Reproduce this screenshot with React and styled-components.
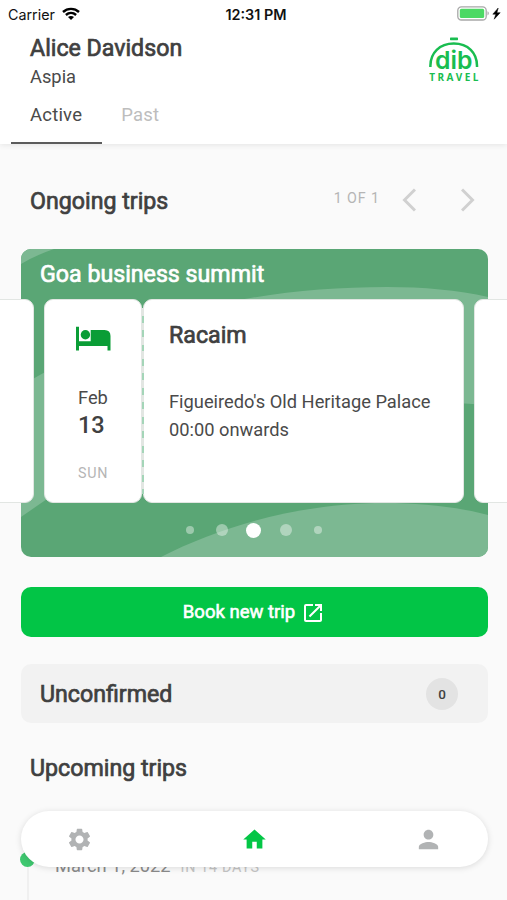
import React from 'react'
import styled, { createGlobalStyle } from 'styled-components'
import { MdHome, MdOpenInNew, MdPerson, MdSettings } from 'react-icons/md'

const GlobalStyle = createGlobalStyle`
	* {
		box-sizing: border-box;
	}
	body {
		margin: 0;
		background: #fafafa;
		font-family: Roboto, sans-serif;
		color: #404040;
	}
`

const Screen = styled.div`
	position: relative;
	display: flex;
	flex-direction: column;
	width: 507px;
	height: 900px;
	overflow: hidden;
	background: #fafafa;

	> * {
		flex: none;
	}
`
const Text = styled.div`
	font-size: ${props => props.$size || 18.3}px;
	line-height: ${props => props.$line || 28}px;
	font-weight: ${props => props.$weight || 400};
	letter-spacing: ${props => props.$spacing || 0}px;
	color: ${props => props.$color || '#4a4a4a'};
	white-space: nowrap;
`
const Title = styled.div`
	font-size: 23.2px;
	line-height: 30px;
	color: ${props => props.$color || '#404040'};
	-webkit-text-stroke: 0.7px ${props => props.$color || '#404040'};
	white-space: nowrap;
`

const Header = styled.header`
	height: 144px;
	background: #fff;
	box-shadow: 0 1px 6px rgba(0, 0, 0, 0.09);
`
const StatusBar = styled.div`
	display: grid;
	grid-template-columns: 1fr auto 1fr;
	align-items: center;
	height: 28px;
	padding: 0 5px 0 8px;
	font-family: Inter, sans-serif;
	font-size: 14.3px;
	color: #111;
`
const Carrier = styled.div`
	display: flex;
	align-items: center;
	gap: 7px;
`
const Clock = styled.div`
	font-weight: 600;
	font-size: 14.4px;
	margin-right: -2px;
`
const Power = styled.div`
	display: flex;
	justify-content: flex-end;
	margin-top: -1px;
`
const Profile = styled.div`
	display: flex;
	justify-content: space-between;
	height: 61px;
	padding: 5px 28px 0 30px;
`
const LogoSvg = styled.svg`
	margin-top: 4px;
`
const Tabs = styled.div`
	display: flex;
	height: 55px;
	padding-left: 11px;
`
const Tab = styled.div`
	padding: 12px 20px 0 19px;
	height: 55px;
	font-size: 18.5px;
	line-height: 28px;
	color: ${props => (props.$active ? '#4a4a4a' : '#bdbdbd')};
	border-bottom: 2px solid ${props => (props.$active ? '#5c5c5c' : 'transparent')};
	letter-spacing: 0.2px;
`

const SectionHead = styled.div`
	display: flex;
	align-items: center;
	justify-content: space-between;
	height: 105px;
	padding: 8px 32px 0 30px;
`
const Pager = styled.div`
	display: flex;
	align-items: center;
	margin-top: -1px;
`
const PageCount = styled(Text)`
	margin-top: -4px;
`
const Chevron = styled.svg`
	margin-left: ${props => props.$gap}px;
`

const TripCard = styled.section`
	position: relative;
	height: 307.5px;
	margin: 0 19.5px 0 20.5px;
	border-radius: 10px;
	background: #5aa675;
`
const Waves = styled.svg`
	position: absolute;
	inset: 0;
	border-radius: 10px;
`
const TripTitle = styled.div`
	position: relative;
	height: 50px;
	padding: 10px 19.5px 0;
`
const Slides = styled.div`
	position: relative;
	display: flex;
	height: 204px;
	margin: 0 -19.5px 0 -20.5px;
	overflow: hidden;
`
const Sheet = styled.div`
	flex: none;
	width: ${props => props.$width}px;
	margin-left: ${props => props.$gap || 0}px;
	padding: ${props => props.$pad || 0};
	background: #fff;
	border: 1px solid #e2e6e3;
	border-radius: ${props => props.$radius || '9px'};
`
const DateSheet = styled(Sheet)`
	display: flex;
	flex-direction: column;
`
const StayDate = styled.div`
	padding: 34px 0 0 2px;
`
const WeekDay = styled(Text)`
	margin-top: 20px;
`
const Details = styled.div`
	margin-top: 38px;
`
const Perforation = styled.div`
	flex: none;
	align-self: center;
	width: 2px;
	height: 186px;
	margin: 0 -0.5px;
	z-index: 1;
	background: repeating-linear-gradient(#e2e6e2 0 7.5px, #a4d5b8 7.5px 14.5px);
`
const Dots = styled.div`
	position: relative;
	display: flex;
	align-items: center;
	justify-content: center;
	height: 54px;
`
const DotSlot = styled.div`
	display: flex;
	justify-content: center;
	width: 31.8px;
`
const Dot = styled.div`
	width: ${props => props.$size}px;
	height: ${props => props.$size}px;
	border-radius: 50%;
	background: ${props => (props.$on ? '#fff' : 'rgba(255, 255, 255, 0.4)')};
`

const BookButton = styled.button`
	display: flex;
	align-items: center;
	justify-content: center;
	gap: 6px;
	height: 50.5px;
	margin: 30px 19.5px 0 20.5px;
	padding: 0;
	border: 0;
	border-radius: 10px;
	background: #02c546;
	color: #fff;
	font-family: inherit;
	font-size: 18.5px;
	-webkit-text-stroke: 0.6px #fff;

	svg {
		-webkit-text-stroke: 0;
		margin-top: 2px;
	}
`
const Unconfirmed = styled.div`
	display: flex;
	align-items: center;
	justify-content: space-between;
	height: 59px;
	margin: 27px 19.5px 0 20.5px;
	padding: 0 29.5px 0 19.5px;
	border-radius: 10px;
	background: #f2f2f2;
`
const Badge = styled.div`
	width: 32px;
	height: 32px;
	border-radius: 50%;
	background: #e3e3e3;
	font-size: 13.5px;
	font-weight: 500;
	line-height: 32px;
	text-align: center;
`
const Upcoming = styled.div`
	padding: 30px 30px 0;
`
const Timeline = styled.div`
	display: flex;
	height: 60px;
	margin-top: 69px;
	padding-left: 20px;
`
const Rail = styled.div`
	display: flex;
	flex-direction: column;
	align-items: center;
	width: 15px;

	&::before {
		content: '';
		width: 15px;
		height: 15px;
		border-radius: 50%;
		background: #3fc870;
	}
	&::after {
		content: '';
		width: 2px;
		flex: 1;
		background: #f0f0f0;
	}
`
const TripDate = styled.div`
	display: flex;
	align-items: baseline;
	gap: 10px;
	padding-left: 20px;
`

const TabBar = styled.nav`
	position: absolute;
	left: 20.5px;
	right: 19.5px;
	top: 811px;
	display: grid;
	grid-template-columns: 1fr 1fr 1fr;
	align-items: center;
	height: 56px;
	padding: 0 44.5px 0 45px;
	border-radius: 28px;
	background: #fff;
	box-shadow: 0 1px 6px rgba(0, 0, 0, 0.13);
`
const NavItem = styled.div`
	display: flex;
	justify-content: ${props => props.$align || 'center'};
	color: ${props => (props.$active ? '#04c646' : '#b1b3b4')};
`

const Wifi = () => (
	<svg width="18" height="14" viewBox="0 0 18 14" fill="none" stroke="#000" strokeWidth="2.4">
		<path d="M1 5C5.500 0.800 12.500 0.800 17 5" />
		<path d="M3.900 8C6.900 5.300 11.100 5.300 14.100 8" />
		<path d="M9 13L6 10C7.700 8.500 10.300 8.500 12 10Z" fill="#000" stroke="none" />
	</svg>
)

const Battery = () => (
	<svg width="45" height="16" viewBox="0 0 45 16">
		<rect x="0.800" y="0.800" width="28.400" height="13.200" rx="3.600" fill="#fff" stroke="#a8a8a8" strokeWidth="1.300" />
		<rect x="2.800" y="2.800" width="24.400" height="9.200" rx="1.600" fill="#4cd964" />
		<path d="M30.500 5.300C32.300 6 32.300 8.800 30.500 9.500Z" fill="#a8a8a8" />
		<path d="M41.200 2L35.800 8.200H38.800L37.200 13.200L43.200 6.700H39.900Z" fill="#000" stroke="#000" strokeWidth="0.500" />
	</svg>
)

const Logo = () => (
	<LogoSvg width="50" height="46" viewBox="0 0 50 46">
		<rect x="21" y="0.600" width="8" height="2.600" rx="0.600" fill="#19bd50" />
		<path d="M1.400 30C0.900 15.500 11 6.600 24.800 6.600S48.500 15.500 48 30" fill="none" stroke="#19bd50" strokeWidth="2.500" />
		<text x="6" y="32.300" textLength="37.500" fontFamily="Inter, sans-serif" fontSize="24.800" fontWeight="600" fill="#19bd50">dib</text>
		<text x="0.300" y="43.700" textLength="49" fontFamily="Open Sans, sans-serif" fontSize="10" fontWeight="700" fill="#19bd50">TRAVEL</text>
	</LogoSvg>
)

const Bed = () => (
	<svg width="35" height="25" viewBox="0 0 35 25" fill="#0a9d36">
		<path d="M0 0.700H3V15.300H14.700V4H28.500Q34.500 4 34.500 10V24.500H31.500V20H3V24.500H0Z" />
		<circle cx="9.400" cy="8.800" r="4.700" />
	</svg>
)

const dots = [8, 12, 15, 12, 8]

const App = () => {
	return (
		<Screen>
			<GlobalStyle />
			<Header>
				<StatusBar>
					<Carrier>
						Carrier
						<Wifi />
					</Carrier>
					<Clock>12:31 PM</Clock>
					<Power>
						<Battery />
					</Power>
				</StatusBar>
				<Profile>
					<div>
						<Title>Alice Davidson</Title>
						<Text>Aspia</Text>
					</div>
					<Logo />
				</Profile>
				<Tabs>
					<Tab $active>Active</Tab>
					<Tab>Past</Tab>
				</Tabs>
			</Header>

			<SectionHead>
				<Title>Ongoing trips</Title>
				<Pager>
					<PageCount $size={14.3} $spacing={0.9} $color="#b5b5b5">1 OF 1</PageCount>
					<Chevron $gap={22} width="14" height="24" viewBox="0 0 14 24" fill="none" stroke="#d0d0d0" strokeWidth="3">
						<path d="M13 1.500L2.500 12L13 22.500" />
					</Chevron>
					<Chevron $gap={45} width="14" height="24" viewBox="0 0 14 24" fill="none" stroke="#d0d0d0" strokeWidth="3">
						<path d="M1 1.500L11.500 12L1 22.500" />
					</Chevron>
				</Pager>
			</SectionHead>

			<TripCard>
				<Waves width="467" height="307.5" viewBox="0 0 467 307.5" fill="#7cb892">
					<path d="M0 0H33Q15 6 0 15Z" />
					<path d="M190 57C245 44 305 38 366 38C402 38 437 41 467 48V156L420 153H190Z" />
					<path d="M0 137L13.500 129L26 122V250L0 268Z" />
					<path d="M140 308C200 277 280 254 364 254C400 254 437 258 467 266V308Z" />
				</Waves>
				<TripTitle>
					<Title $color="#fff">Goa business summit</Title>
				</TripTitle>
				<Slides>
					<Sheet $width={44} $gap={-10} $radius="0 9px 9px 0" />
					<DateSheet $width={98} $gap={10} $pad="26px 0 0 31px">
						<Bed />
						<StayDate>
							<Text $line={26}>Feb</Text>
							<Text $size={23.5} $weight={500} $color="#404040">13</Text>
							<WeekDay $size={14.3} $spacing={0.7} $color="#b5b5b5">SUN</WeekDay>
						</StayDate>
					</DateSheet>
					<Perforation />
					<Sheet $width={321} $pad="20px 0 0 25px">
						<Title>Racaim</Title>
						<Details>
							<Text>Figueiredo's Old Heritage Palace</Text>
							<Text>00:00 onwards</Text>
						</Details>
					</Sheet>
					<Sheet $width={50} $gap={10} $radius="9px 0 0 9px" />
				</Slides>
				<Dots>
					{dots.map((size, i) => (
						<DotSlot key={i}>
							<Dot $size={size} $on={i === 2} />
						</DotSlot>
					))}
				</Dots>
			</TripCard>

			<BookButton>
				Book new trip
				<MdOpenInNew size={24} />
			</BookButton>

			<Unconfirmed>
				<Title>Unconfirmed</Title>
				<Badge>0</Badge>
			</Unconfirmed>

			<Upcoming>
				<Title>Upcoming trips</Title>
			</Upcoming>
			<Timeline>
				<Rail />
				<TripDate>
					<Text $size={18.3} $color="#8a8a8a">March 1, 2022</Text>
					<Text $size={14.3} $spacing={0.7} $color="#c4c4c4">IN 14 DAYS</Text>
				</TripDate>
			</Timeline>

			<TabBar>
				<NavItem $align="flex-start">
					<MdSettings size={27} />
				</NavItem>
				<NavItem $active>
					<MdHome size={27} />
				</NavItem>
				<NavItem $align="flex-end">
					<MdPerson size={29} />
				</NavItem>
			</TabBar>
		</Screen>
	)
}

export default App
